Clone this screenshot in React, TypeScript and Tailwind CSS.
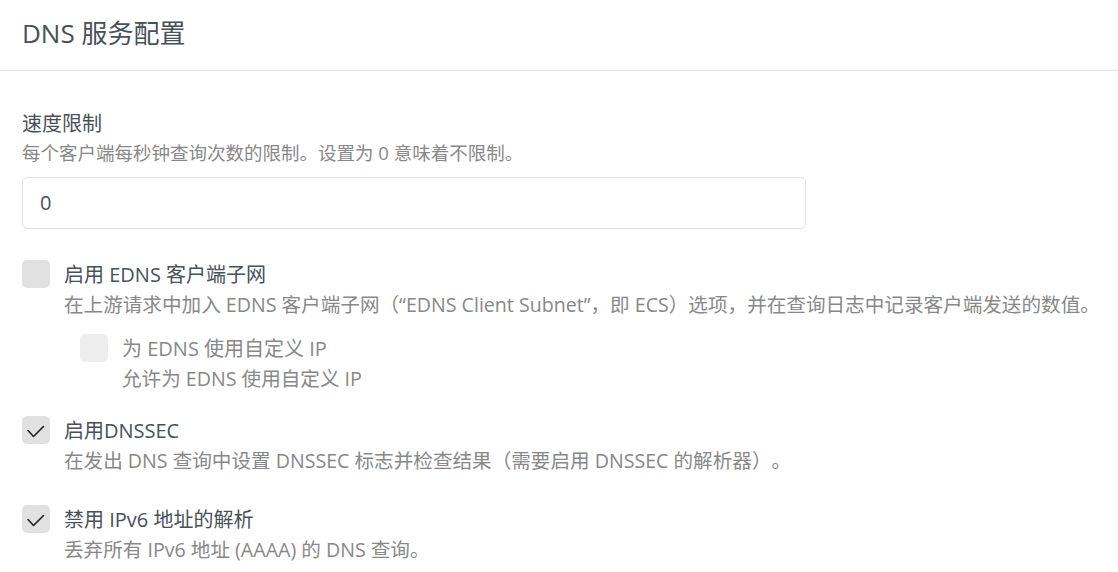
const font = { fontFamily: '"Open Sans", "Noto Sans CJK SC", sans-serif' }

function Check({ checked, disabled }: { checked?: boolean; disabled?: boolean }) {
  return (
    <div className={`w-[28px] h-[28px] shrink-0 rounded-[5px] flex items-center justify-center ${disabled ? 'bg-[#eeeeee]' : 'bg-[#e1e1e1]'}`}>
      {checked && (
        <svg width="28" height="28" viewBox="0 0 28 28" fill="none">
          <polyline points="6,14.5 11.5,20.5 21.5,10.5" stroke="#222" strokeWidth="1.6" strokeLinecap="round" strokeLinejoin="round" />
        </svg>
      )}
    </div>
  )
}

function Option({ title, desc, checked, disabled }: { title: string; desc: string; checked?: boolean; disabled?: boolean }) {
  return (
    <div className="flex items-start gap-[14px]">
      <Check checked={checked} disabled={disabled} />
      <div>
        <div className={`text-[20px] leading-[30px] ${disabled ? 'text-[#888]' : 'text-[#495057]'}`}>{title}</div>
        <div className="text-[19.6px] leading-[30px] text-[#888] whitespace-nowrap [text-spacing-trim:space-all]">{desc}</div>
      </div>
    </div>
  )
}

export default function App() {
  return (
    <div className="min-h-screen bg-white text-[#495057] overflow-hidden" style={font}>
      <div className="h-[71px] px-[22px] flex items-center border-b border-[#e6e6e6]">
        <h1 className="text-[26px] leading-none -mt-[4px]">DNS 服务配置</h1>
      </div>

      <div className="px-[22px] pt-[38px]">
        <div className="text-[20px] leading-[30px]">速度限制</div>
        <div className="text-[18.5px] leading-[28px] text-[#888]">每个客户端每秒钟查询次数的限制。设置为 0 意味着不限制。</div>
        <div className="mt-[10px] w-[784px] h-[52px] border border-[#dee2e6] rounded-[5px] flex items-center px-[17px] text-[20px]">
          0
        </div>

        <div className="mt-[31px]">
          <Option
            title="启用 EDNS 客户端子网"
            desc="在上游请求中加入 EDNS 客户端子网（“EDNS Client Subnet”，即 ECS）选项，并在查询日志中记录客户端发送的数值。"
          />
          <div className="mt-[14px] ml-[58px]">
            <Option title="为 EDNS 使用自定义 IP" desc="允许为 EDNS 使用自定义 IP" disabled />
          </div>
        </div>

        <div className="mt-[22px]">
          <Option title="启用DNSSEC" desc="在发出 DNS 查询中设置 DNSSEC 标志并检查结果（需要启用 DNSSEC 的解析器）。" checked />
        </div>

        <div className="mt-[29px]">
          <Option title="禁用 IPv6 地址的解析" desc="丢弃所有 IPv6 地址 (AAAA) 的 DNS 查询。" checked />
        </div>
      </div>
    </div>
  )
}
